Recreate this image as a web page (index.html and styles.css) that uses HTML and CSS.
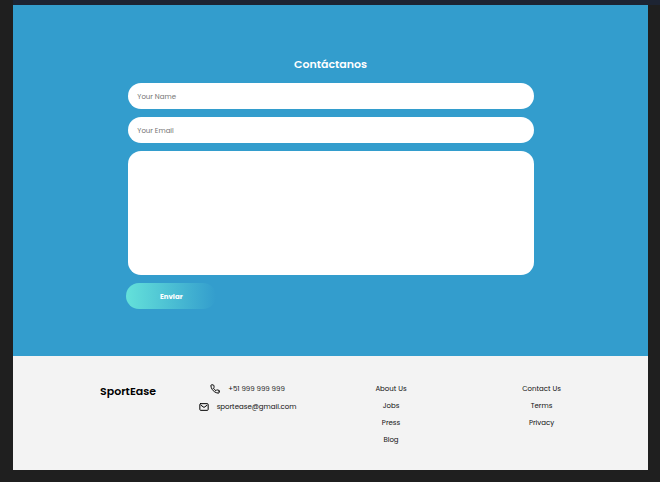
FILE: index.html
```html
<!DOCTYPE html>
<html lang="es">
<head>
  <meta charset="utf-8">
  <meta name="viewport" content="width=device-width, initial-scale=1">
  <title>SportEase</title>
  <link rel="stylesheet" href="styles.css">
</head>
<body>
  <div class="page">
    <main class="contact">
      <h1 class="contact-title">Contáctanos</h1>
      <form class="contact-form">
        <input class="field" type="text" name="name" placeholder="Your Name" aria-label="Your Name">
        <input class="field" type="email" name="email" placeholder="Your Email" aria-label="Your Email">
        <textarea class="field message" name="message" aria-label="Message"></textarea>
        <button class="submit" type="submit">Enviar</button>
      </form>
    </main>
    <footer class="footer">
      <p class="brand">SportEase</p>
      <ul class="links info">
        <li>
          <a href="tel:+51999999999">
            <svg class="icon" viewBox="0 0 24 24" aria-hidden="true"><path d="M22 16.9v3a2 2 0 0 1-2.2 2 19.8 19.8 0 0 1-8.6-3.1 19.5 19.5 0 0 1-6-6A19.8 19.8 0 0 1 2.1 4.2 2 2 0 0 1 4.1 2h3a2 2 0 0 1 2 1.7c.1 1 .4 1.9.7 2.8a2 2 0 0 1-.4 2.1L8.1 9.9a16 16 0 0 0 6 6l1.3-1.3a2 2 0 0 1 2.1-.4c.9.3 1.8.6 2.8.7a2 2 0 0 1 1.7 2z"/></svg>
            <span>+51 999 999 999</span>
          </a>
        </li>
        <li>
          <a href="mailto:sportease@gmail.com">
            <svg class="icon" viewBox="0 0 24 24" aria-hidden="true"><rect x="2" y="4" width="20" height="16" rx="2"/><path d="M5 8l7 5 7-5"/></svg>
            <span>sportease@gmail.com</span>
          </a>
        </li>
      </ul>
      <ul class="links">
        <li><a href="#about">About Us</a></li>
        <li><a href="#jobs">Jobs</a></li>
        <li><a href="#press">Press</a></li>
        <li><a href="#blog">Blog</a></li>
      </ul>
      <ul class="links">
        <li><a href="#contact">Contact Us</a></li>
        <li><a href="#terms">Terms</a></li>
        <li><a href="#privacy">Privacy</a></li>
      </ul>
    </footer>
  </div>
</body>
</html>
```
FILE: styles.css
```css
* {
  box-sizing: border-box;
}

body {
  margin: 0;
  padding: 5px 12px 12px 13px;
  background: linear-gradient(#1d2433 5px, #1f1f1f 5px) 13px 0 no-repeat #1f1f1f;
  font-family: Poppins, Inter, sans-serif;
  font-size: 7px;
  color: #111;
}

.contact {
  padding: 50px 18% 47px;
  background: #339dcd;
}

.contact-title {
  margin: 0 0 10px;
  font-size: 11px;
  line-height: 18px;
  font-weight: 600;
  text-align: center;
  color: #fff;
}

.contact-form {
  display: flex;
  flex-direction: column;
  gap: 8px;
  padding-left: 1px;
}

.field {
  width: 100%;
  height: 26px;
  padding: 1px 9px 0;
  border: 0;
  border-radius: 13px;
  background: #fff;
  font: inherit;
  color: #333;
}

.field::placeholder {
  color: #757575;
  opacity: 1;
}

.message {
  display: block;
  height: 124px;
  padding: 8px 9px;
  resize: none;
}

.submit {
  width: 90px;
  height: 26px;
  margin-left: -2px;
  padding: 1px 0 0;
  border: 0;
  border-radius: 13px;
  background: linear-gradient(90deg, #64e1da, #339dcd);
  font: inherit;
  font-weight: 700;
  color: #fff;
}

.footer {
  display: grid;
  grid-template-columns: 102fr 137fr 150fr 151fr;
  min-height: 114px;
  padding: 27px 31px 20px 64px;
  background: #f3f3f3;
  text-align: center;
}

.brand {
  margin: 0;
  font-size: 11px;
  line-height: 16px;
  font-weight: 600;
  color: #000;
}

.links {
  display: flex;
  flex-direction: column;
  gap: 5px;
  margin: 0;
  padding: 0;
  list-style: none;
  line-height: 12px;
}

.info {
  gap: 6px;
}

.links a {
  color: inherit;
  text-decoration: none;
}

.info a {
  display: flex;
  align-items: center;
  justify-content: center;
  gap: 8px;
}

.icon {
  width: 10px;
  height: 10px;
  fill: none;
  stroke: #000;
  stroke-width: 2.4;
  stroke-linecap: round;
  stroke-linejoin: round;
}
```
